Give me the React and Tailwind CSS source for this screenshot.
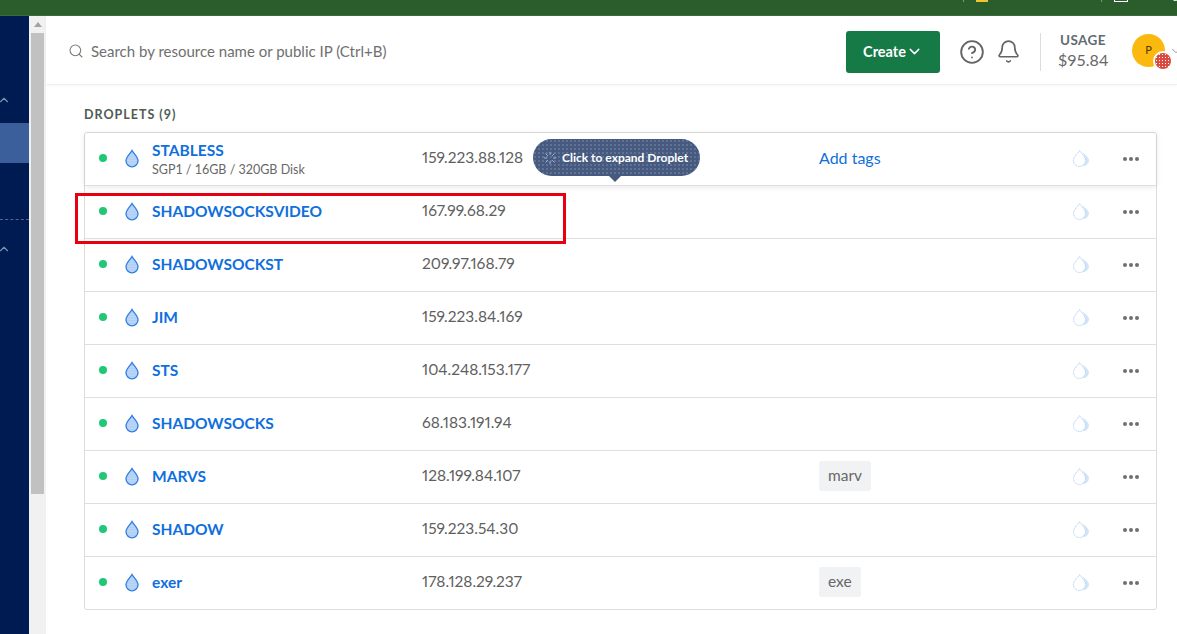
import React from "react";
import { Search, CircleHelp, Bell, ChevronDown, ChevronUp, Loader } from "lucide-react";

const droplets = [
  { name: "STABLESS", sub: "SGP1 / 16GB / 320GB Disk", ip: "159.223.88.128", addTags: true },
  { name: "SHADOWSOCKSVIDEO", ip: "167.99.68.29" },
  { name: "SHADOWSOCKST", ip: "209.97.168.79" },
  { name: "JIM", ip: "159.223.84.169" },
  { name: "STS", ip: "104.248.153.177" },
  { name: "SHADOWSOCKS", ip: "68.183.191.94" },
  { name: "MARVS", ip: "128.199.84.107", tag: "marv" },
  { name: "SHADOW", ip: "159.223.54.30" },
  { name: "exer", ip: "178.128.29.237", tag: "exe" },
];

const DROP = "M8 1.5C6.8 4 2 7.4 2 11.8a6 6 0 0 0 12 0C14 7.4 9.2 4 8 1.5z";

function Drop() {
  return (
    <svg width="16" height="19" viewBox="0 0 16 19" className="shrink-0">
      <defs>
        <pattern id="dropDots" width="1.6" height="1.6" patternUnits="userSpaceOnUse">
          <circle cx="0.8" cy="0.8" r="0.5" fill="#5f9bea" />
        </pattern>
      </defs>
      <path d={DROP} fill="#d5e6fb" />
      <path d={DROP} fill="url(#dropDots)" />
      <path d={DROP} fill="none" stroke="#2f7de1" strokeWidth="1.3" />
    </svg>
  );
}

function BackupDrop() {
  return (
    <svg width="18" height="18" viewBox="0 0 18 18" className="shrink-0">
      <defs>
        <pattern id="backupDots" width="1.5" height="1.5" patternUnits="userSpaceOnUse">
          <circle cx="0.75" cy="0.75" r="0.55" fill="#8fbcec" />
        </pattern>
      </defs>
      <path d="M10 2.5c1 2 7 5 7 9a6 6 0 0 1-7 5.5c2-1.5 3.5-3 3.5-5.5S11 5 10 2.5z" fill="url(#backupDots)" />
      <path d="M7.5 1.5C6.5 4 1.5 7.5 1.5 11.5a6 6 0 0 0 12 0C13.5 7.5 8.5 4 7.5 1.5z" fill="none" stroke="#b5d4f3" strokeWidth="1" strokeDasharray="1.3 0.6" />
    </svg>
  );
}

function Row({ d, last }) {
  return (
    <div className={`flex items-center ${last ? "h-[52px]" : "h-[53px] border-b border-[#dfdfdf]"} ${d.addTags ? "shadow-[0_1px_6px_rgba(0,0,0,0.1)]" : ""}`}>
      <span className="ml-[14px] w-2 h-2 rounded-full bg-[#20c777] shrink-0 mb-[2px]" />
      <div className="ml-[17px] mb-[2px]"><Drop /></div>
      <div className={`ml-[12px] w-[270px] shrink-0 ${d.sub ? "" : "pb-[2px]"}`}>
        <div className="text-[15.5px] leading-[19px] font-bold text-[#0f6fdc]">{d.name}</div>
        {d.sub && <div className="mt-[2px] text-[12.5px] leading-[16px] text-[#676767]">{d.sub}</div>}
      </div>
      <div className="w-[397px] shrink-0 pb-[3px] text-[15.5px] text-[#5f5f5f] [font-variant-numeric:proportional-nums]">{d.ip}</div>
      <div className="flex-1 pb-[3px]">
        {d.addTags && <span className="text-[16px] text-[#0f6fdc]">Add tags</span>}
        {d.tag && (
          <span className="inline-flex items-center h-[30px] px-[9px] rounded-[3px] bg-[#f1f2f3] text-[15.5px] text-[#676767]">{d.tag}</span>
        )}
      </div>
      <div className="pb-[3px]"><BackupDrop /></div>
      <div className="flex gap-[2px] ml-[33px] mr-[17px]">
        <span className="w-[4px] h-[4px] rounded-full bg-[#6f6f6f]" />
        <span className="w-[4px] h-[4px] rounded-full bg-[#6f6f6f]" />
        <span className="w-[4px] h-[4px] rounded-full bg-[#6f6f6f]" />
      </div>
    </div>
  );
}

export default function App() {
  return (
    <div className="relative flex flex-col h-screen w-full overflow-hidden bg-white font-['Lato','Liberation_Sans',sans-serif]">
      {/* browser bookmarks bar, cut off at the top */}
      <div className="h-[16px] shrink-0 flex items-end justify-between overflow-hidden bg-[#2a5d2b] border-b border-[#3d6b3d] text-white text-[12px] leading-[14px] pb-[13px]">
        <span>nts</span>
        <div className="flex items-end">
          <span className="w-px h-[14px] bg-[#7d9a7d] mr-[12px]" />
          <span className="w-[12px] h-[14px] bg-[#f4c430] mr-[11px]" />
          <span className="w-[91px]">Other bookmarks</span>
          <span className="w-px h-[14px] bg-[#7d9a7d] ml-[11px] mr-[12px]" />
          <span className="w-[14px] h-[14px] border border-white mr-[9px]" />
          <span className="w-[40px] overflow-hidden whitespace-nowrap">Reading list</span>
        </div>
      </div>

      <div className="flex flex-1 min-h-0">
        {/* sidebar, mostly hidden */}
        <aside className="w-[29px] shrink-0 bg-[#001a52] flex flex-col">
          <div className="h-[88px] flex items-end overflow-hidden">
            <ChevronUp size={14} className="text-[#7d8fb3] -ml-[3px] -mb-[3px]" />
          </div>
          <div className="h-[40px] mt-[19px] bg-[#3a5f9a] bg-[radial-gradient(#9fb5d8_0.6px,transparent_0.7px)] bg-[length:2px_2px]" />
          <div className="h-[57px] border-b border-dashed border-[#52668f]" />
          <ChevronUp size={14} className="text-[#7d8fb3] -ml-[3px] mt-[22px]" />
        </aside>

        {/* page scrollbar */}
        <div className="w-[17px] shrink-0 bg-[#f1f1f1] flex flex-col items-center">
          <div className="h-[17px] flex items-center justify-center">
            <span className="w-0 h-0 border-x-[4px] border-x-transparent border-b-[5px] border-b-[#a3a3a3]" />
          </div>
          <div className="w-[13px] h-[461px] bg-[#c1c1c1]" />
        </div>

        <main className="flex-1 min-w-0 flex flex-col">
          <header className="h-[69px] shrink-0 flex items-center border-b border-[#f0f0f0] shadow-[0_1px_3px_rgba(0,0,0,0.03)]">
            <Search size={16} strokeWidth={1.6} className="ml-[22px] mt-[2px] text-[#7a7a7a]" />
            <span className="ml-[7px] mt-[2px] text-[15px] text-[#6f6f6f]">Search by resource name or public IP (Ctrl+B)</span>
            <div className="ml-auto flex items-center">
              <button className="flex items-center justify-center w-[94px] h-[42px] mt-[3px] rounded-[3px] bg-[#157a46] text-white text-[14.5px] font-bold">
                Create
                <ChevronDown size={17} strokeWidth={2} />
              </button>
              <CircleHelp size={26} strokeWidth={1.7} className="ml-[19px] mt-[3px] text-[#646464]" />
              <Bell size={25} strokeWidth={1.6} className="ml-[11px] mt-[3px] text-[#646464]" />
              <div className="w-px h-[38px] mt-[3px] bg-[#dcdcdc] ml-[19px]" />
              <div className="ml-[17px] w-[50px] pt-[1px] text-center">
                <div className="text-[13.5px] leading-[17px] font-bold tracking-[0.4px] text-[#5f6b70]">USAGE</div>
                <div className="text-[16px] leading-[21px] text-[#676767]">$95.84</div>
              </div>
              <div className="relative ml-[24px] mr-[-14px] flex items-center">
                <div className="w-[33px] h-[33px] rounded-full bg-[#fbb80f] flex items-center justify-center text-[11px] text-[#4a3a00]">P</div>
                <span className="absolute left-[21px] top-[17px] w-[20px] h-[20px] rounded-full border-2 border-white bg-[#d94a3f] bg-[radial-gradient(#ffffff_0.6px,transparent_0.7px)] bg-[length:3px_3px]" />
                <ChevronDown size={14} strokeWidth={1.3} className="ml-[4px] mt-[2px] text-[#777777]" />
              </div>
              <div className="w-[8px]" />
            </div>
          </header>

          <section className="pl-[38px] pr-[20px] pt-[22px]">
            <h2 className="text-[12.5px] leading-[15px] font-bold tracking-[1px] text-[#4f5b53]">DROPLETS (9)</h2>
            <div className="mt-[10px] border border-[#dcdcdc] rounded-[3px]">
              {droplets.map((d, i) => (
                <Row key={d.name} d={d} last={i === droplets.length - 1} />
              ))}
            </div>
          </section>
        </main>
      </div>

      {/* tooltip over the first row */}
      <div className="absolute left-[533px] top-[139px] w-[167px] h-[37px] rounded-full flex items-center pl-[10px] bg-[#46597e] bg-[radial-gradient(#7d8ca9_0.6px,transparent_0.8px)] bg-[length:4px_4px] text-white text-[12px] font-bold">
        <Loader size={14} strokeWidth={1.5} className="text-[#a9c5e8] mr-[5px]" />
        Click to expand Droplet
        <span className="absolute left-[76px] top-[37px] w-0 h-0 border-x-[6px] border-x-transparent border-t-[6px] border-t-[#46597e]" />
      </div>

      {/* red annotation box */}
      <div className="absolute left-[75px] top-[193px] w-[491px] h-[51px] border-[3px] border-[#e60012]" />
    </div>
  );
}
